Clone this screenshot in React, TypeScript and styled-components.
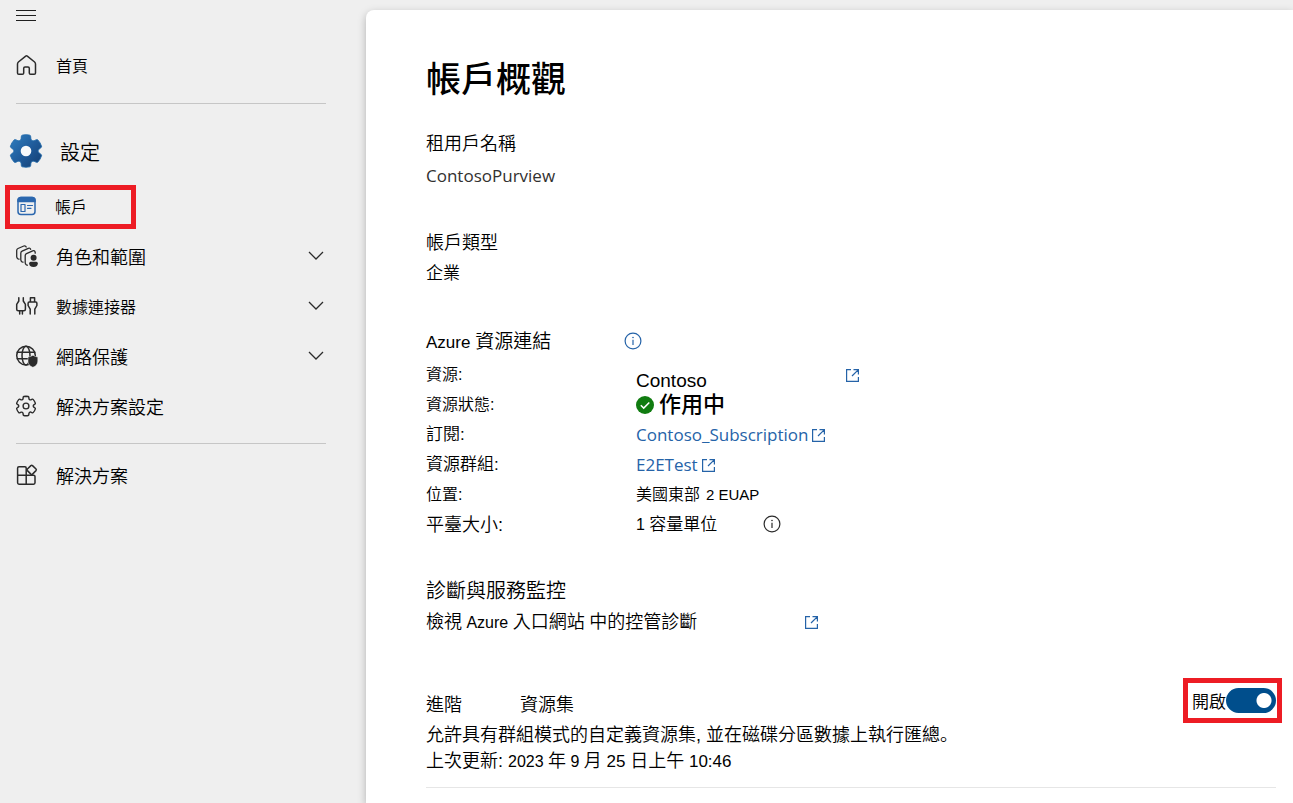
import React from "react";
import styled, { createGlobalStyle } from "styled-components";

const cjk = `"Noto Sans CJK TC", sans-serif`;
const arial = `"Liberation Sans", ${cjk}`;
const human = `"Open Sans", ${cjk}`;
const red = "#ed1c24";
const blue = "#2563a8";

const Global = createGlobalStyle`
  *, *::before, *::after { box-sizing: border-box; }
  html, body { margin: 0; }
  body { background: #efefef; color: #000; font-family: ${arial}; font-weight: 350; font-size: 18px; }
  h1, h2, p, dl, dt, dd, ul { margin: 0; padding: 0; font-weight: inherit; }
  button, a { color: inherit; font: inherit; text-decoration: none; }
`;

const Shell = styled.div`
  display: grid;
  grid-template-columns: 366px minmax(0, 1fr);
  min-height: 100vh;
`;

const Sidebar = styled.nav`
  padding: 0 40px 0 16px;
`;

const MenuButton = styled.button`
  display: flex;
  align-items: center;
  height: 30px;
  margin-bottom: 10px;
  padding: 0;
  border: 0;
  background: none;
`;

const Rule = styled.hr<{ $above: number; $below: number }>`
  height: 1px;
  margin: ${(p) => p.$above}px 0 ${(p) => p.$below}px;
  border: 0;
  background: #c6c6c6;
`;

const NavList = styled.ul`
  list-style: none;
`;

const NavLink = styled.a<{ $size?: number }>`
  display: flex;
  align-items: center;
  gap: 18px;
  height: 50px;
  margin-left: -2px;
  font-size: ${(p) => p.$size ?? 18}px;
`;

const NavToggle = styled.button<{ $size?: number }>`
  display: flex;
  align-items: center;
  gap: 18px;
  width: calc(100% + 2px);
  height: 50px;
  margin-left: -2px;
  padding: 0 2px 1px 0;
  border: 0;
  background: none;
  text-align: left;
  && { font-size: ${(p) => p.$size ?? 18}px; }
`;

const ToggleLabel = styled.span`
  flex: 1;
`;

const SelectedLink = styled.a`
  display: flex;
  align-items: center;
  gap: 17px;
  width: 131px;
  height: 44px;
  margin: 4px 0 2px -11px;
  padding: 0 0 3px 4px;
  border: 5px solid ${red};
  font-size: 16px;
`;

const SettingsHeading = styled.h2`
  display: flex;
  align-items: center;
  gap: 14px;
  height: 60px;
  margin-left: -10px;
  font-size: 20px;
`;

const Panel = styled.main`
  margin-top: 10px;
  padding: 46px 17px 0 60px;
  border-radius: 8px 0 0 0;
  background: #fff;
  box-shadow: 0 3px 8px rgba(0, 0, 0, 0.26);
`;

const Title = styled.h1`
  font-size: 35px;
  line-height: 48px;
  && { font-weight: 500; }
`;

const Section = styled.section<{ $above: number }>`
  margin-top: ${(p) => p.$above}px;
`;

const Heading = styled.h2<{ $size?: number }>`
  display: flex;
  align-items: center;
  font-size: ${(p) => p.$size ?? 18}px;
  line-height: 30px;
`;

const HeadingText = styled.span`
  flex: 0 0 198px;
`;

const Body = styled.p<{ $size?: number; $line?: number }>`
  font-size: ${(p) => p.$size ?? 18}px;
  line-height: ${(p) => p.$line ?? 32}px;
`;

const Name = styled(Body)`
  color: #323130;
  font-family: ${human};
  font-weight: 400;
`;

const Latin = styled.span<{ $size?: number }>`
  font-size: ${(p) => p.$size ?? 16}px;
  font-weight: 400;
`;

const Details = styled.dl`
  display: grid;
  grid-template-columns: 210px minmax(0, 1fr);
  grid-auto-rows: 30px;
  align-items: center;
  margin-top: 2px;
`;

const Term = styled.dt<{ $size?: number }>`
  font-size: ${(p) => p.$size ?? 16}px;
  line-height: 30px;
`;

const Value = styled.dd<{ $size?: number; $gap?: number }>`
  display: flex;
  align-items: center;
  gap: ${(p) => p.$gap ?? 6}px;
  font-size: ${(p) => p.$size ?? 16}px;
  line-height: 30px;
  white-space: pre;
`;

const ResourceName = styled.span`
  padding-top: 12px;
  font-weight: 400;
  line-height: 18px;
`;

const Active = styled.span`
  font-weight: 500;
`;

const TextLink = styled.a`
  display: inline-flex;
  align-items: center;
  gap: 4px;
  && { color: ${blue}; font-family: ${human}; font-weight: 400; }
`;

const IconLink = styled.a`
  display: inline-flex;
`;

const InfoButton = styled.button<{ $color: string }>`
  display: inline-flex;
  padding: 0 0 3px;
  border: 0;
  background: none;
  && { color: ${(p) => p.$color}; }
`;

const DiagnosticsRow = styled.div`
  display: grid;
  grid-template-columns: 379px auto;
  justify-content: start;
  align-items: center;
`;

const Advanced = styled.section`
  display: flex;
  justify-content: space-between;
  align-items: flex-start;
  margin-top: 39px;
  padding-bottom: 12px;
  border-bottom: 1px solid #e6e6e6;
`;

const AdvancedText = styled.div`
  padding-top: 12px;
`;

const AdvancedHeading = styled(Heading)`
  gap: 58px;
`;

const Stop = styled.span`
  font-family: "Noto Sans CJK SC", sans-serif;
`;

const SwitchBox = styled.label`
  display: flex;
  align-items: center;
  justify-content: flex-end;
  flex: none;
  width: 99px;
  height: 45px;
  margin-right: -6px;
  border: 5px solid ${red};
  font-size: 17px;
`;

const Switch = styled.input`
  appearance: none;
  width: 50px;
  height: 25px;
  margin: 0 1px 0 0;
  border-radius: 13px;
  background: radial-gradient(circle at 38px 50%, #fff 7px, #004e8c 8px);
`;

const Glyph = ({ children, color = "#2b2b2b" }: { children: React.ReactNode; color?: string }) => (
  <svg width="24" height="24" viewBox="0 0 24 24" fill="none" stroke={color} strokeWidth="1.5" strokeLinecap="round" strokeLinejoin="round" aria-hidden="true">
    {children}
  </svg>
);

const gearOutline =
  "M12.012 2.25c.734.008 1.465.093 2.182.253a.75.75 0 0 1 .582.649l.17 1.527a1.384 1.384 0 0 0 1.927 1.116l1.4-.615a.75.75 0 0 1 .85.174 9.793 9.793 0 0 1 2.205 3.792.75.75 0 0 1-.272.825l-1.241.916a1.38 1.38 0 0 0 0 2.226l1.243.915a.75.75 0 0 1 .272.826 9.798 9.798 0 0 1-2.204 3.792.75.75 0 0 1-.849.175l-1.406-.617a1.38 1.38 0 0 0-1.926 1.114l-.17 1.526a.75.75 0 0 1-.571.647 9.518 9.518 0 0 1-4.406 0 .75.75 0 0 1-.572-.647l-.169-1.524a1.382 1.382 0 0 0-1.925-1.11l-1.406.616a.75.75 0 0 1-.849-.175 9.798 9.798 0 0 1-2.204-3.796.75.75 0 0 1 .272-.826l1.243-.916a1.38 1.38 0 0 0 0-2.226l-1.243-.914a.75.75 0 0 1-.272-.826 9.793 9.793 0 0 1 2.205-3.792.75.75 0 0 1 .85-.174l1.4.615a1.387 1.387 0 0 0 1.93-1.118l.17-1.526a.75.75 0 0 1 .583-.65c.717-.159 1.45-.243 2.201-.252Z";

const MenuIcon = () => (
  <svg width="20" height="12" viewBox="0 0 20 12" stroke="#1f1f1f" aria-hidden="true">
    <path d="M0 1.5H20M0 6.5H20M0 11.5H20" />
  </svg>
);

const HomeIcon = () => (
  <Glyph>
    <path d="M13.3 3.1Q12.5 2.5 11.7 3.1L4.4 9Q3.5 9.8 3.5 11V20Q3.5 21.3 4.8 21.3H8.4Q9.7 21.3 9.7 20V15.2Q9.7 14 11 14H14Q15.3 14 15.3 15.2V20Q15.3 21.3 16.6 21.3H20.2Q21.5 21.3 21.5 20V11Q21.5 9.8 20.6 9Z" />
  </Glyph>
);

const BigGear = () => (
  <svg width="40" height="40" viewBox="0 0 24 24" aria-hidden="true">
    <defs>
      <linearGradient id="gear" x1="0" y1="0" x2="1" y2="1">
        <stop offset="0" stopColor="#2f7fc0" />
        <stop offset="0.5" stopColor="#1f5c9c" />
        <stop offset="1" stopColor="#143d70" />
      </linearGradient>
    </defs>
    <path d={gearOutline} fill="url(#gear)" stroke="#1b66a8" strokeWidth="0.5" />
    <circle cx="12" cy="12" r="3.2" fill="#f7f9fb" />
  </svg>
);

const AccountIcon = () => (
  <Glyph color="#2b67ae">
    <rect x="4" y="3.5" width="17" height="17" rx="3" />
    <path d="M4 7.5V6.5Q4 3.5 7 3.5H18Q21 3.5 21 6.5V7.5Z" fill="#2b67ae" />
    <rect x="7" y="10.5" width="4" height="7" strokeWidth="1.2" />
    <path d="M13.5 11.5H18.5M13.5 14.3H17" strokeWidth="1.2" />
  </Glyph>
);

const RolesIcon = () => (
  <Glyph>
    <g strokeWidth="1.3">
      <path d="M5 15.2L4 14.8Q2.7 14.2 2.7 12.8V6.6Q2.7 5.1 4 4.5L9.8 2Q11.6 1.4 12.2 3" />
      <path d="M9 18.2L8 17.8Q6.8 17.2 6.8 15.8V9.2Q6.8 7.7 8.1 7.1L14.3 4.3Q16.1 3.7 16.6 5.3" />
      <path d="M13.3 21.2L12.4 20.8Q11.2 20.2 11.2 18.8V11.8Q11.2 10.3 12.5 9.7L18.7 6.9Q20.8 6.2 21.2 8.3V9.2" />
    </g>
    <g fill="#2b2b2b" stroke="none">
      <circle cx="19.6" cy="13.7" r="3" />
      <path d="M16.6 17.7H22.4Q23.8 17.7 23.8 19.2Q23.8 23 19.5 23Q15.2 23 15.2 19.2Q15.2 17.7 16.6 17.7Z" />
    </g>
  </Glyph>
);

const ConnectorIcon = () => (
  <Glyph>
    <path d="M4.8 3.8V7L2.7 10.3V15.2Q2.7 16.7 4.2 16.7H9.9Q11.4 16.7 11.4 15.2V10.3L9.3 7V3.8M5.7 17V20M8.4 17V20" />
    <path d="M16.4 8V3.8H20.6V8M15.2 8H21.8Q22.9 8 22.9 9.2V11.5L20.8 15.2V20M15.2 8Q14.1 8 14.1 9.2V11.5L16.2 15.2V20" />
  </Glyph>
);

const NetworkIcon = () => (
  <Glyph>
    <circle cx="12" cy="11.6" r="9.3" />
    <ellipse cx="12" cy="11.6" rx="4" ry="9.3" />
    <path d="M3.3 8.3H20.7M3.3 14.8H15" />
    <path d="M18.9 11.2Q20.9 12.9 23.8 13V17.1Q23.8 21.6 18.9 23.3Q14 21.6 14 17.1V13Q16.9 12.9 18.9 11.2Z" fill="#2b2b2b" stroke="#efefef" strokeWidth="0.5" />
  </Glyph>
);

const GearIcon = () => (
  <Glyph>
    <path d={gearOutline} strokeWidth="1.4" />
    <circle cx="12" cy="12" r="2.9" strokeWidth="1.4" />
  </Glyph>
);

const SolutionsIcon = () => (
  <Glyph>
    <path d="M12.2 12.2V5Q12.2 3.8 11 3.8H5Q3.6 3.8 3.6 5.2V19.8Q3.6 21.2 5 21.2H19.6Q21 21.2 21 19.8V13.6Q21 12.2 19.6 12.2ZM3.6 12.2H12.2M12.2 12.2V21.2" />
    <path d="M16.9 2.6L13.4 6Q12.7 6.8 13.4 7.6L16.9 11.1Q17.7 11.8 18.5 11.1L22 7.6Q22.7 6.8 22 6L18.5 2.6Q17.7 1.9 16.9 2.6Z" />
  </Glyph>
);

const Chevron = () => (
  <svg width="16" height="9" viewBox="0 0 16 9" fill="none" stroke="#2b2b2b" strokeWidth="1.3" aria-hidden="true">
    <path d="M1 1L8 8L15 1" />
  </svg>
);

const InfoIcon = () => (
  <svg width="18" height="18" viewBox="0 0 18 18" fill="none" stroke="currentColor" strokeWidth="1.2" aria-hidden="true">
    <circle cx="9" cy="9" r="7.9" />
    <path d="M9 7.8V13" />
    <circle cx="9" cy="5.5" r="0.8" fill="currentColor" stroke="none" />
  </svg>
);

const OpenIcon = () => (
  <svg width="13" height="13" viewBox="0 0 13 13" fill="none" stroke={blue} strokeWidth="1.2" aria-hidden="true">
    <path d="M5 .6H.6V12.4H12.4V8M7.5 .6H12.4V5.5M12.2 .8L6 7" />
  </svg>
);

const CheckIcon = () => (
  <svg width="18" height="18" viewBox="0 0 18 18" fill="none" aria-hidden="true">
    <circle cx="9" cy="9" r="9" fill="#107c10" />
    <path d="M4.8 9.3L7.7 12.1L13.3 6.5" stroke="#fff" strokeWidth="1.5" />
  </svg>
);

const groups = [
  { label: "角色和範圍", icon: <RolesIcon />, size: 18 },
  { label: "數據連接器", icon: <ConnectorIcon />, size: 16 },
  { label: "網路保護", icon: <NetworkIcon />, size: 18 },
];

export default function App() {
  return (
    <>
      <Global />
      <Shell lang="zh-Hant">
        <Sidebar>
          <MenuButton aria-label="功能表"><MenuIcon /></MenuButton>
          <NavLink href="#home" $size={16}><HomeIcon />首頁</NavLink>
          <Rule $above={13} $below={17} />
          <SettingsHeading><BigGear />設定</SettingsHeading>
          <NavList>
            <li><SelectedLink href="#account" aria-current="page"><AccountIcon />帳戶</SelectedLink></li>
            {groups.map((g) => (
              <li key={g.label}>
                <NavToggle $size={g.size} aria-expanded="false">
                  {g.icon}
                  <ToggleLabel>{g.label}</ToggleLabel>
                  <Chevron />
                </NavToggle>
              </li>
            ))}
            <li><NavLink href="#solution-settings"><GearIcon />解決方案設定</NavLink></li>
          </NavList>
          <Rule $above={12} $below={6} />
          <NavLink href="#solutions"><SolutionsIcon />解決方案</NavLink>
        </Sidebar>

        <Panel>
          <Title>帳戶概觀</Title>

          <Section $above={25}>
            <Heading>租用戶名稱</Heading>
            <Name $size={17} $line={34}>ContosoPurview</Name>
          </Section>

          <Section $above={35}>
            <Heading>帳戶類型</Heading>
            <Body $size={17}>企業</Body>
          </Section>

          <Section $above={37}>
            <Heading $size={19}>
              <HeadingText><Latin $size={17}>Azure </Latin>資源連結</HeadingText>
              <InfoButton $color={blue} aria-label="Azure 資源連結資訊"><InfoIcon /></InfoButton>
            </Heading>
            <Details>
              <Term>資源:</Term>
              <Value $size={19} $gap={139}>
                <ResourceName>Contoso</ResourceName>
                <IconLink href="#resource" aria-label="開啟資源"><OpenIcon /></IconLink>
              </Value>
              <Term>資源狀態:</Term>
              <Value $size={22} $gap={5}><CheckIcon /><Active>作用中</Active></Value>
              <Term $size={17}>訂閱:</Term>
              <Value $size={17}><TextLink href="#subscription">Contoso_Subscription<OpenIcon /></TextLink></Value>
              <Term $size={17}>資源群組:</Term>
              <Value $size={17}><TextLink href="#group">E2ETest<OpenIcon /></TextLink></Value>
              <Term>位置:</Term>
              <Value>美國東部<Latin $size={15}>2 EUAP</Latin></Value>
              <Term $size={18}>平臺大小:</Term>
              <Value $size={17} $gap={46}>
                <span><Latin>1 </Latin>容量單位</span>
                <InfoButton $color="#2b2b2b" aria-label="平臺大小資訊"><InfoIcon /></InfoButton>
              </Value>
            </Details>
          </Section>

          <Section $above={36}>
            <Heading $size={20}>診斷與服務監控</Heading>
            <DiagnosticsRow>
              <Body>檢視<Latin> Azure </Latin>入口網站<Latin> </Latin>中的控管診斷</Body>
              <IconLink href="#diagnostics" aria-label="開啟診斷"><OpenIcon /></IconLink>
            </DiagnosticsRow>
          </Section>

          <Advanced>
            <AdvancedText>
              <AdvancedHeading><span>進階</span><span>資源集</span></AdvancedHeading>
              <Body $line={26}>允許具有群組模式的自定義資源集, 並在磁碟分區數據上執行匯總<Stop lang="zh-Hans">。</Stop></Body>
              <Body $line={26}>
                上次更新: <Latin>2023 </Latin>年<Latin> 9 </Latin>月<Latin $size={17}> 25 </Latin>日上午<Latin $size={17}> 10:46</Latin>
              </Body>
            </AdvancedText>
            <SwitchBox>
              開啟
              <Switch type="checkbox" role="switch" defaultChecked />
            </SwitchBox>
          </Advanced>
        </Panel>
      </Shell>
    </>
  );
}
